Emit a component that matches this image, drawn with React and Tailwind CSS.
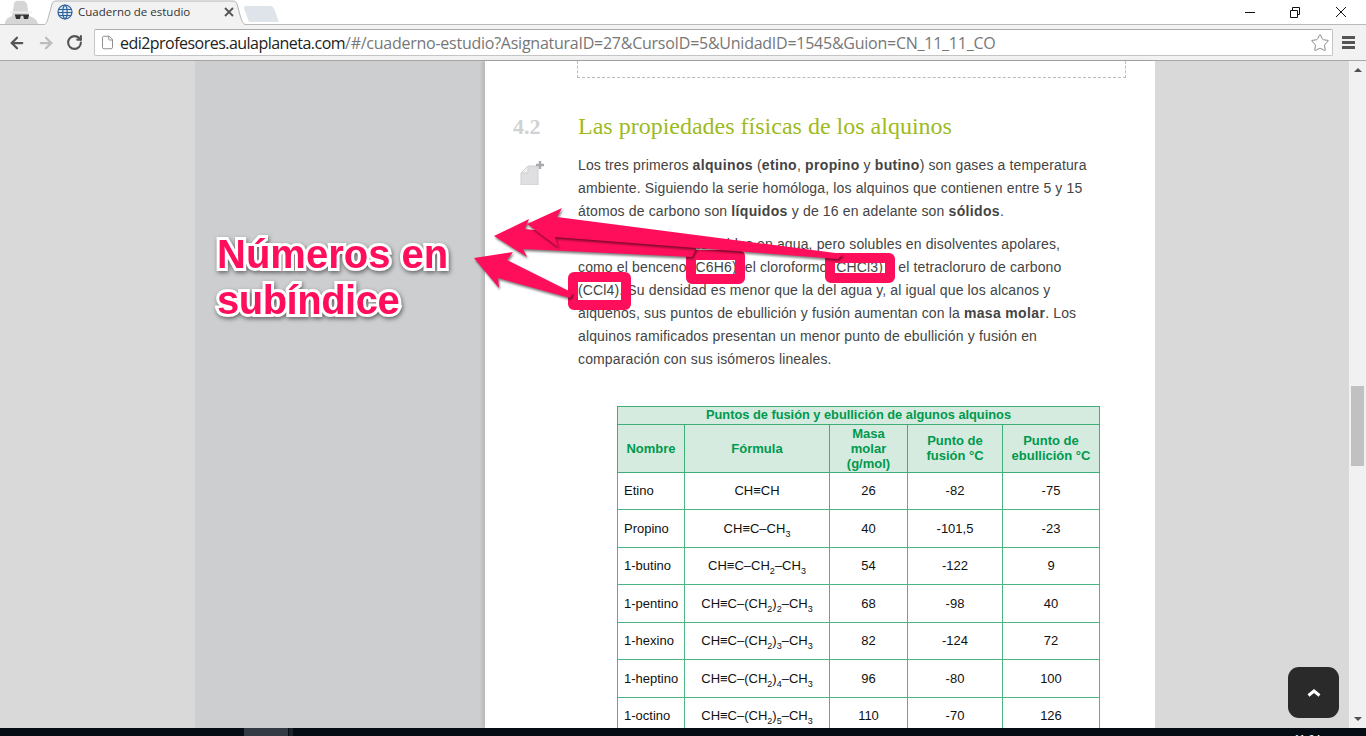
import React from "react";
import { ArrowLeft, ArrowRight, RotateCw, File, Star } from "lucide-react";

const ROWS = [
  ["Etino", ["CH≡CH"], "26", "-82", "-75"],
  ["Propino", ["CH≡C–CH", "3"], "40", "-101,5", "-23"],
  ["1-butino", ["CH≡C–CH", "2", "–CH", "3"], "54", "-122", "9"],
  ["1-pentino", ["CH≡C–(CH", "2", ")", "2", "–CH", "3"], "68", "-98", "40"],
  ["1-hexino", ["CH≡C–(CH", "2", ")", "3", "–CH", "3"], "82", "-124", "72"],
  ["1-heptino", ["CH≡C–(CH", "2", ")", "4", "–CH", "3"], "96", "-80", "100"],
  ["1-octino", ["CH≡C–(CH", "2", ")", "5", "–CH", "3"], "110", "-70", "126"],
];

// odd items of the formula are subscripts
function Formula({ parts }) {
  return (
    <span>
      {parts.map((p, i) =>
        i % 2 === 1 ? (
          <span key={i} className="text-[9px] relative top-[4px]">{p}</span>
        ) : (
          <span key={i}>{p}</span>
        )
      )}
    </span>
  );
}

function Incognito() {
  return (
    <svg width="40" height="24" viewBox="0 0 40 24">
      <path d="M5 24 C5 19 9 17 12 16 L14 4 C14 1 17 0 20 1 C23 0 26 1 27 4 L29 16 C33 17 37 19 38 24 Z" fill="#d6d6d6" />
      <rect x="10" y="11.5" width="22" height="1.5" fill="#eee" />
      <path d="M15 15 h6 l-1 4 h-4 Z M23 15 h6 l-1 4 h-4 Z" fill="#333" />
      <rect x="15" y="14.5" width="14" height="1.2" fill="#333" />
    </svg>
  );
}

function Globe() {
  return (
    <svg width="16" height="16" viewBox="0 0 16 16" fill="none" stroke="#2f5f97" strokeWidth="1.2">
      <circle cx="8" cy="8" r="7" fill="#dbe7f2" />
      <path d="M1.5 5.5 H14.5 M1 8.5 H15 M2.5 11.5 H13.5" />
      <path d="M8 1 C11 3 11 13 8 15 M8 1 C5 3 5 13 8 15" />
    </svg>
  );
}

function NoteIcon() {
  return (
    <svg width="24" height="24" viewBox="0 0 24 24">
      <path d="M8 5 H18 V24 H1 V12 Z" fill="#dfdfe2" stroke="#cfcfd2" />
      <path d="M8 5 V12 H1 Z" fill="#f1f1f3" stroke="#cfcfd2" />
      <path d="M20 0 V8 M16 4 H24" stroke="#aaaaae" strokeWidth="2.4" />
    </svg>
  );
}

// annotation arrows drawn over the page
function Arrows() {
  const shadow = "drop-shadow-[1px_2px_1px_rgba(0,0,0,0.5)]";
  return (
    <svg
      width="1366"
      height="736"
      viewBox="0 0 1366 736"
      className="absolute top-0 left-0 pointer-events-none"
    >
      <g fill="#ff0f5b">
        <polygon className={shadow} points="494,236 529,219 525,229 697,247 692,257 523,249 527,257" />
        <polygon className={shadow} points="527,224 562,208 557,217 843,254 838,259 555,237 558,247" />
        <polygon className={shadow} points="474,258 513,252 507,260 573,293 570,298 498,278 499,288" />
      </g>
    </svg>
  );
}

function Mark({ className }) {
  return <div className={`absolute border-[10px] border-[#ff0f5b] rounded-md ${className}`} />;
}

export default function App() {
  return (
    <div className="relative w-[1366px] h-[736px] overflow-hidden flex flex-col bg-white font-['Liberation_Sans',sans-serif]">
      {/* tab strip */}
      <div className="h-6 flex items-end bg-white shrink-0">
        <div className="w-[41px] h-6 overflow-hidden shrink-0">
          <Incognito />
        </div>
        <div className="relative w-[207px] h-6 shrink-0 flex items-center pl-[16px]">
          <svg width="207" height="25" viewBox="0 0 207 25" className="absolute top-0 left-0">
            <path d="M0 25 C6 25 6 22 8 15 L11 4 C12 1 14 1 17 1 H190 C193 1 195 1 196 4 L199 15 C201 22 202 25 207 25" fill="#f2f2f2" stroke="#b4b4b4" />
          </svg>
          <div className="relative flex items-center gap-[5px]">
            <Globe />
            <span className="text-[11.5px] text-[#333] font-['Open_Sans',sans-serif] w-[141px] whitespace-nowrap">Cuaderno de estudio</span>
            <svg width="10" height="10" viewBox="0 0 10 10" stroke="#555" strokeWidth="1.8"><path d="M1 1 L9 9 M9 1 L1 9" /></svg>
          </div>
        </div>
        <div className="w-[30px] h-[16px] mb-[2px] ml-[-2px] bg-[#dfe3ea] rounded-t-[3px] skew-x-[20deg] shrink-0" />
        <div className="flex-1" />
        <div className="self-start flex items-center h-6">
          <svg width="121" height="24" viewBox="0 0 121 24" fill="none" stroke="#111">
            <path d="M0 12.5 H10" />
            <path d="M45.5 10.5 H52.5 V17.5 H45.5 Z M47.5 10 V7.5 H54.5 V14.5 H52.5" />
            <path d="M91 7 L101 17 M101 7 L91 17" />
          </svg>
        </div>
      </div>

      {/* toolbar */}
      <div className="h-[37px] shrink-0 bg-[#f2f2f2] border-t border-b border-t-[#b9b9b9] border-b-[#a6a6a6] flex items-center pl-[8px] pr-[10px]">
        <ArrowLeft size={18} strokeWidth={3} color="#555" />
        <ArrowRight size={18} strokeWidth={3} color="#bdbdbd" className="ml-[11px]" />
        <RotateCw size={17} strokeWidth={3} color="#555" className="ml-[11px]" />
        <div className="ml-[11px] w-[1239px] h-[27px] bg-white border border-[#c4c4c4] border-t-[#ababab] rounded-[2px] flex items-center pl-[5px] pr-[2px]">
          <File size={15} color="#888" strokeWidth={1.5} />
          <span className="ml-[5px] text-[16px] tracking-[-0.25px] text-[#777] font-['Open_Sans',sans-serif] whitespace-nowrap">
            <span className="text-[#222] tracking-[-0.53px]">edi2profesores.aulaplaneta.com</span>/#/cuaderno-estudio?AsignaturaID=27&amp;CursoID=5&amp;UnidadID=1545&amp;Guion=CN_11_11_CO
          </span>
          <div className="flex-1" />
          <Star size={20} color="#8a8a8a" strokeWidth={1.2} />
        </div>
        <div className="ml-[9px] w-[13px] flex flex-col gap-[2px]">
          <div className="h-[3px] bg-[#555]" />
          <div className="h-[3px] bg-[#555]" />
          <div className="h-[3px] bg-[#555]" />
        </div>
      </div>

      {/* page */}
      <div className="flex-1 min-h-0 flex">
        <div className="w-[195px] bg-[#d9d9d9]" />
        <div className="w-[290px] bg-[#cdced0]" />
        <div className="w-[670px] bg-white shadow-[-3px_0_3px_rgba(0,0,0,0.1)] relative overflow-hidden">
          <div className="ml-[92px] w-[549px] h-[17px] border-l border-r border-b border-dashed border-[#bbb]" />

          <div className="flex mt-[30px] h-[36px] items-center">
            <div className="w-[93px] pl-[28px] text-[22px] font-bold text-[#d0d1d4] font-['Liberation_Serif',serif]">4.2</div>
            <h2 className="text-[24px] text-[#9dbb1d] font-['Liberation_Serif',serif] whitespace-nowrap">Las propiedades físicas de los alquinos</h2>
          </div>

          <div className="flex mt-[10px]">
            <div className="w-[93px] pl-[35px] pt-[7px]">
              <NoteIcon />
            </div>
            <div className="text-[14px] leading-[23px] tracking-[0.14px] text-[#444] whitespace-nowrap">
              <p>
                Los tres primeros <b className="tracking-[0.35px]">alquinos</b> (<b className="tracking-[0.35px]">etino</b>, <b className="tracking-[0.35px]">propino</b> y <b className="tracking-[0.35px]">butino</b>) son gases a temperatura<br />
                ambiente. Siguiendo la serie homóloga, los alquinos que contienen entre 5 y 15<br />
                átomos de carbono son <b className="tracking-[0.35px]">líquidos</b> y de 16 en adelante son <b className="tracking-[0.35px]">sólidos</b>.
              </p>
              <p className="mt-[10px]">
                Los alquinos son insolubles en agua, pero solubles en disolventes apolares,<br />
                como el benceno (C6H6), el cloroformo (CHCl3) y el tetracloruro de carbono<br />
                (CCl4). Su densidad es menor que la del agua y, al igual que los alcanos y<br />
                alquenos, sus puntos de ebullición y fusión aumentan con la <b className="tracking-[0.35px]">masa molar</b>. Los<br />
                alquinos ramificados presentan un menor punto de ebullición y fusión en<br />
                comparación con sus isómeros lineales.
              </p>
            </div>
          </div>

          <table className="ml-[132px] mt-[34.5px] w-[482px] table-fixed border-collapse text-[13px] text-[#111]">
            <colgroup>
              <col className="w-[67px]" />
              <col className="w-[145px]" />
              <col className="w-[78px]" />
              <col className="w-[95px]" />
              <col className="w-[97px]" />
            </colgroup>
            <thead className="bg-[#d5ebdf] text-[#00994d] font-bold text-center">
              <tr className="h-[18px]">
                <th colSpan={5} className="border border-[#3fae78] leading-[14px] text-[12.8px]">Puntos de fusión y ebullición de algunos alquinos</th>
              </tr>
              <tr className="h-[48px] leading-[15px]">
                <th className="border border-[#3fae78]">Nombre</th>
                <th className="border border-[#3fae78]">Fórmula</th>
                <th className="border border-[#3fae78]">Masa<br />molar<br />(g/mol)</th>
                <th className="border border-[#3fae78]">Punto de<br />fusión °C</th>
                <th className="border border-[#3fae78]">Punto de<br />ebullición °C</th>
              </tr>
            </thead>
            <tbody className="text-center">
              {ROWS.map((r) => (
                <tr key={r[0]} className="h-[37.5px]">
                  <td className="border border-[#4db583] text-left pl-[6px]">{r[0]}</td>
                  <td className="border border-[#4db583]"><Formula parts={r[1]} /></td>
                  <td className="border border-[#4db583]">{r[2]}</td>
                  <td className="border border-[#4db583]">{r[3]}</td>
                  <td className="border border-[#4db583]">{r[4]}</td>
                </tr>
              ))}
            </tbody>
          </table>
        </div>
        <div className="w-[194px] bg-[#d9d9d9]" />
        <div className="w-[17px] bg-[#f1f1f1] flex flex-col items-center">
          <div className="mt-[7px] w-0 h-0 border-l-[4px] border-r-[4px] border-b-[4px] border-l-transparent border-r-transparent border-b-[#505050]" />
          <div className="mt-[314px] w-[13px] h-[80px] bg-[#c1c1c1]" />
          <div className="mt-[251px] w-0 h-0 border-l-[4px] border-r-[4px] border-t-[4px] border-l-transparent border-r-transparent border-t-[#505050]" />
        </div>
      </div>

      {/* windows taskbar, almost all of it below the window */}
      <div className="h-2 shrink-0 bg-[#050c14] flex overflow-hidden relative">
        <div className="ml-[244px] w-[44px] bg-[#333a44]" />
        <div className="w-[4px] ml-[1px] bg-[#1c232c]" />
        <span className="absolute left-[1294px] top-[5px] text-[11px] leading-[12px] text-white">11:04</span>
      </div>

      <Mark className="left-[686px] top-[250px] w-[59px] h-[34px]" />
      <Mark className="left-[825px] top-[253px] w-[70px] h-[30px]" />
      <Mark className="left-[568px] top-[272px] w-[63px] h-[38px]" />
      <Arrows />

      <div className="absolute left-[217px] top-[231px] text-[40px] leading-[46px] font-bold text-[#ff0f5b] whitespace-nowrap [-webkit-text-stroke:6px_white] [paint-order:stroke_fill] drop-shadow-[1px_2px_2px_rgba(0,0,0,0.5)]">
        Números en<br /><span className="tracking-[-0.5px]">subíndice</span>
      </div>

      <button className="absolute left-[1288px] top-[667px] w-[51px] h-[51px] rounded-[11px] bg-[#2a2a2a] flex items-center justify-center">
        <svg width="14" height="9" viewBox="0 0 14 9" fill="none" stroke="white" strokeWidth="3"><path d="M1.5 7.5 L7 3 L12.5 7.5" /></svg>
      </button>
    </div>
  );
}
